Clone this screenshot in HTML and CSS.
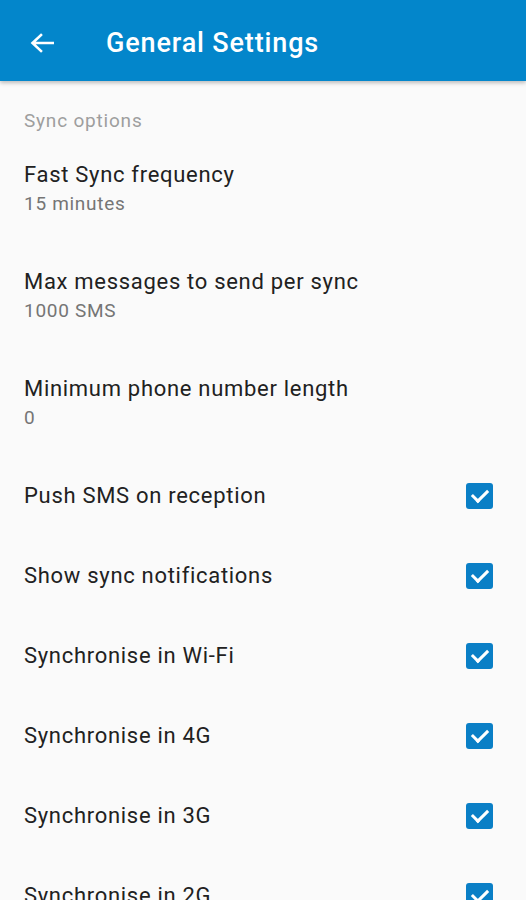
FILE: index.html
```html
<!DOCTYPE html>
<html lang="en">
<head>
  <meta charset="UTF-8" />
  <meta name="viewport" content="width=device-width, initial-scale=1.0" />
  <title>General Settings</title>
  <link rel="stylesheet" href="styles.css">
</head>
<body>
  <header class="toolbar">
    <svg class="back" width="24" height="20" viewBox="0 0 24 20">
      <path d="M23 10H3M11 2L2.5 10L11 18" fill="none" stroke="#ffffff" stroke-width="2.6" stroke-linecap="square" />
    </svg>
    <h1 class="toolbar-title">General Settings</h1>
  </header>

  <main class="prefs">
    <div class="category">Sync options</div>

    <div class="pref two-line">
      <div class="pref-title">Fast Sync frequency</div>
      <div class="pref-summary">15 minutes</div>
    </div>

    <div class="pref two-line">
      <div class="pref-title">Max messages to send per sync</div>
      <div class="pref-summary">1000 SMS</div>
    </div>

    <div class="pref two-line">
      <div class="pref-title">Minimum phone number length</div>
      <div class="pref-summary">0</div>
    </div>

    <div class="pref check-row">
      <div class="pref-title">Push SMS on reception</div>
      <span class="checkbox"></span>
    </div>

    <div class="pref check-row">
      <div class="pref-title">Show sync notifications</div>
      <span class="checkbox"></span>
    </div>

    <div class="pref check-row">
      <div class="pref-title">Synchronise in Wi-Fi</div>
      <span class="checkbox"></span>
    </div>

    <div class="pref check-row">
      <div class="pref-title">Synchronise in 4G</div>
      <span class="checkbox"></span>
    </div>

    <div class="pref check-row">
      <div class="pref-title">Synchronise in 3G</div>
      <span class="checkbox"></span>
    </div>

    <div class="pref check-row">
      <div class="pref-title">Synchronise in 2G</div>
      <span class="checkbox"></span>
    </div>
  </main>
</body>
</html>
```

FILE: styles.css
```css
body {
  margin: 0;
  padding: 0;
  background-color: #fafafa;
  font-family: Roboto, 'Noto Sans', Arial, sans-serif;
  overflow: hidden;
}

.toolbar {
  height: 81px;
  box-sizing: border-box;
  background-color: #0386cb;
  display: flex;
  align-items: center;
  padding: 4px 0 0 30px;
  box-shadow: 0 2px 4px rgba(0, 0, 0, 0.25);
  position: relative;
  z-index: 1;
}

.back {
  display: block;
}

.toolbar-title {
  margin: 0 0 0 52px;
  color: #ffffff;
  font-size: 27px;
  font-weight: 500;
  letter-spacing: 0.85px;
}

.category {
  height: 54px;
  box-sizing: border-box;
  padding: 28px 24px 0;
  line-height: 24px;
  font-size: 19px;
  letter-spacing: 0.8px;
  color: #9e9e9e;
}

.pref {
  padding: 0 24px;
  box-sizing: border-box;
}

.two-line {
  height: 107px;
  padding-top: 25px;
}

.pref-title {
  font-size: 22px;
  line-height: 30px;
  letter-spacing: 0.7px;
  color: #212121;
}

.pref-summary {
  font-size: 19px;
  line-height: 28px;
  letter-spacing: 0.7px;
  color: #757575;
}

.check-row {
  height: 80px;
  display: flex;
  align-items: center;
  justify-content: space-between;
  padding-right: 33px;
}

.checkbox {
  width: 27px;
  height: 26px;
  border-radius: 3px;
  background-color: #0a7fc6;
  position: relative;
}

.checkbox::after {
  content: "";
  position: absolute;
  left: 9px;
  top: 3px;
  width: 7px;
  height: 13px;
  border-right: 3px solid #ffffff;
  border-bottom: 3px solid #ffffff;
  transform: rotate(45deg);
}
```
